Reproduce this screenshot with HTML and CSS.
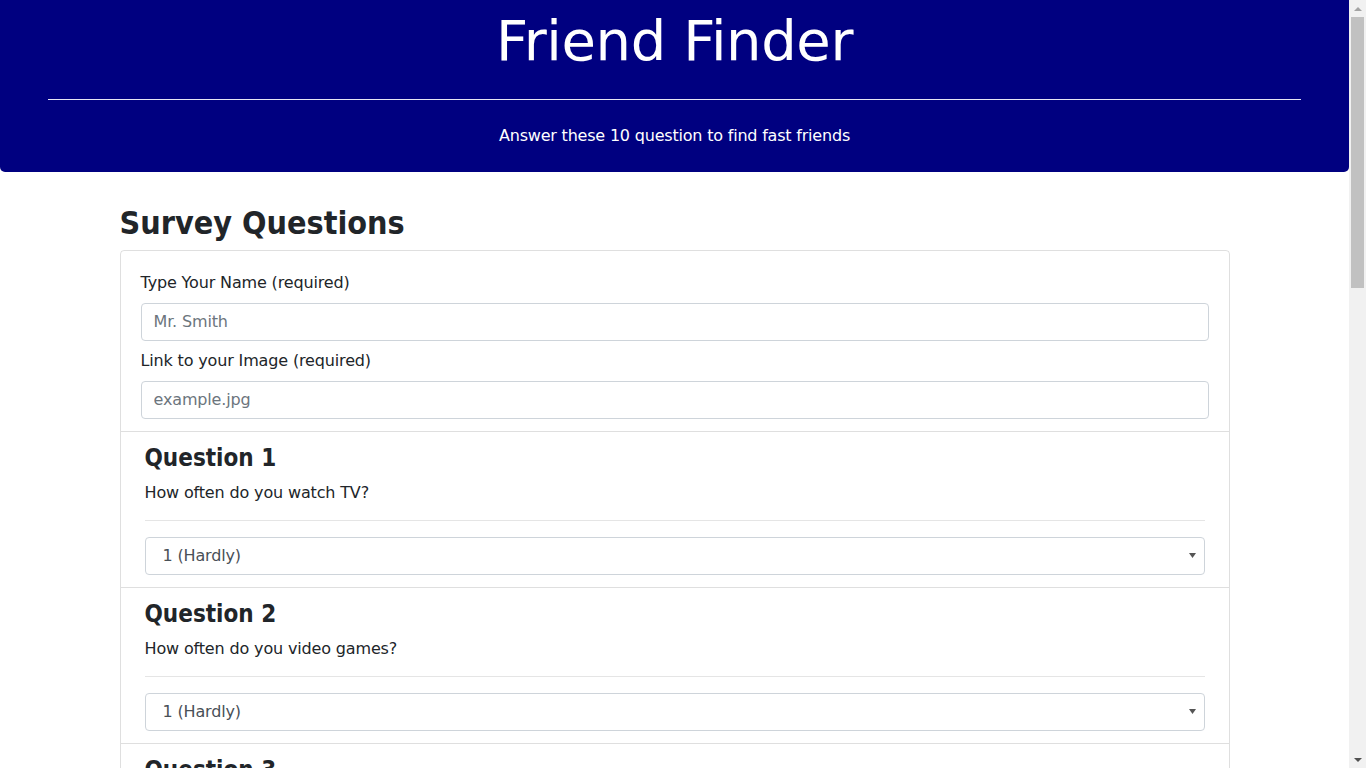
FILE: index.html
```html
<!DOCTYPE html>
<html lang="en">
<head>
<meta charset="utf-8">
<title>Friend Finder</title>
<link rel="stylesheet" href="styles.css">
</head>
<body>
<header class="jumbotron">
  <h1 class="title">Friend Finder</h1>
  <hr class="jumbo-rule">
  <p class="lead-text">Answer these 10 question to find fast friends</p>
</header>
<main class="container">
  <h2 class="page-heading">Survey Questions</h2>
  <form class="card">
    <div class="card-body">
      <div class="form-group">
        <label class="label" for="name">Type Your Name (required)</label>
        <input class="form-control" id="name" type="text" placeholder="Mr. Smith">
      </div>
      <div class="form-group last">
        <label class="label" for="photo">Link to your Image (required)</label>
        <input class="form-control" id="photo" type="text" placeholder="example.jpg">
      </div>
    </div>

    <section class="question">
      <h4 class="q-title">Question 1</h4>
      <p class="q-text">How often do you watch TV?</p>
      <hr class="q-rule">
      <select class="form-select"><option>1 (Hardly)</option><option>2</option><option>3</option><option>4</option><option>5 (Always)</option></select>
    </section>
    <section class="question">
      <h4 class="q-title">Question 2</h4>
      <p class="q-text">How often do you video games?</p>
      <hr class="q-rule">
      <select class="form-select"><option>1 (Hardly)</option><option>2</option><option>3</option><option>4</option><option>5 (Always)</option></select>
    </section>
    <section class="question">
      <h4 class="q-title">Question 3</h4>
      <p class="q-text">How often do you go outside?</p>
      <hr class="q-rule">
      <select class="form-select"><option>1 (Hardly)</option><option>2</option><option>3</option><option>4</option><option>5 (Always)</option></select>
    </section>
    <section class="question">
      <h4 class="q-title">Question 4</h4>
      <p class="q-text">How often do you read books?</p>
      <hr class="q-rule">
      <select class="form-select"><option>1 (Hardly)</option><option>2</option><option>3</option><option>4</option><option>5 (Always)</option></select>
    </section>
    <section class="question">
      <h4 class="q-title">Question 5</h4>
      <p class="q-text">How often do you exercise?</p>
      <hr class="q-rule">
      <select class="form-select"><option>1 (Hardly)</option><option>2</option><option>3</option><option>4</option><option>5 (Always)</option></select>
    </section>
    <section class="question">
      <h4 class="q-title">Question 6</h4>
      <p class="q-text">How often do you travel?</p>
      <hr class="q-rule">
      <select class="form-select"><option>1 (Hardly)</option><option>2</option><option>3</option><option>4</option><option>5 (Always)</option></select>
    </section>
    <section class="question">
      <h4 class="q-title">Question 7</h4>
      <p class="q-text">How often do you cook?</p>
      <hr class="q-rule">
      <select class="form-select"><option>1 (Hardly)</option><option>2</option><option>3</option><option>4</option><option>5 (Always)</option></select>
    </section>
    <section class="question">
      <h4 class="q-title">Question 8</h4>
      <p class="q-text">How often do you listen to music?</p>
      <hr class="q-rule">
      <select class="form-select"><option>1 (Hardly)</option><option>2</option><option>3</option><option>4</option><option>5 (Always)</option></select>
    </section>
    <section class="question">
      <h4 class="q-title">Question 9</h4>
      <p class="q-text">How often do you go to the movies?</p>
      <hr class="q-rule">
      <select class="form-select"><option>1 (Hardly)</option><option>2</option><option>3</option><option>4</option><option>5 (Always)</option></select>
    </section>
    <section class="question">
      <h4 class="q-title">Question 10</h4>
      <p class="q-text">How often do you hang out with friends?</p>
      <hr class="q-rule">
      <select class="form-select"><option>1 (Hardly)</option><option>2</option><option>3</option><option>4</option><option>5 (Always)</option></select>
    </section>
    <div class="actions">
      <button class="btn" type="button">Submit</button>
    </div>
  </form>
</main>
<div class="scrollbar" aria-hidden="true">
  <div class="sb-button">
    <svg width="8" height="4" viewBox="0 0 8 4"><path d="M0 4 L4 0 L8 4 Z" fill="#a3a3a3"/></svg>
  </div>
  <div class="sb-thumb"></div>
  <div class="sb-rest"></div>
  <div class="sb-button">
    <svg width="8" height="4" viewBox="0 0 8 4"><path d="M0 0 L8 0 L4 4 Z" fill="#505050"/></svg>
  </div>
</div>
</body>
</html>
```
FILE: styles.css
```css
* { box-sizing: border-box; }
html, body { margin: 0; padding: 0; }
body {
  margin-right: 17px;
  font-family: "DejaVu Sans", sans-serif;
  font-size: 16px;
  line-height: 1.5;
  letter-spacing: -0.15px;
  color: #212529;
  background: #fff;
}
.scrollbar {
  position: fixed;
  top: 0;
  right: 0;
  width: 17px;
  height: 100vh;
  background: #f1f1f1;
  display: flex;
  flex-direction: column;
  align-items: stretch;
}
.sb-button {
  height: 17px;
  flex: none;
  display: flex;
  align-items: center;
  justify-content: center;
}
.sb-thumb {
  height: 271px;
  flex: none;
  margin: 0 2px;
  background: #c1c1c1;
}
.sb-rest { flex: 1; }
.jumbotron {
  background: #000080;
  color: #fff;
  padding: 7px 48px 24px;
  border-radius: 0 0 5px 5px;
  text-align: center;
  margin-bottom: 32px;
}
.title {
  margin: 0;
  font-size: 56px;
  font-weight: normal;
  line-height: 1.2;
  letter-spacing: -0.4px;
}
.jumbo-rule {
  margin: 25px 0 0;
  border: 0;
  border-top: 1px solid rgba(255, 255, 255, 0.9);
  height: 0;
}
.lead-text {
  margin: 24px 0 0;
  letter-spacing: -0.2px;
}
.container {
  width: 1140px;
  margin: 0 auto;
  padding: 0 15px;
}
.page-heading {
  margin: 0 0 7px;
  font-family: "DejaVu Sans Condensed", "DejaVu Sans", sans-serif;
  font-stretch: condensed;
  font-size: 32px;
  font-weight: bold;
  line-height: 1.2;
  letter-spacing: 0;
}
.card {
  border: 1px solid rgba(0, 0, 0, 0.125);
  border-radius: 4px;
  margin-bottom: 40px;
}
.card-body {
  padding: 20px 20px 12px;
}
.form-group {
  margin-bottom: 8px;
}
.form-group.last { margin-bottom: 0; }
.label {
  display: block;
  margin-bottom: 8px;
}
.form-control, .form-select {
  display: block;
  width: 100%;
  height: 38px;
  padding: 6px 12px;
  font-family: "DejaVu Sans", sans-serif;
  font-size: 16px;
  line-height: 1.5;
  letter-spacing: -0.15px;
  color: #495057;
  background-color: #fff;
  border: 1px solid #ced4da;
  border-radius: 4px;
}
.form-control::placeholder { color: #6c757d; opacity: 1; }
.form-select {
  -webkit-appearance: none;
  appearance: none;
  padding-left: 17px;
  background-image: url("data:image/svg+xml;utf8,<svg xmlns='http://www.w3.org/2000/svg' width='7' height='5'><path d='M0 0 L7 0 L3.5 5 Z' fill='%23555'/></svg>");
  background-repeat: no-repeat;
  background-position: right 8px center;
}
.question {
  border-top: 1px solid rgba(0, 0, 0, 0.125);
  padding: 12px 24px 12px;
}
.q-title {
  margin: 0 0 8px;
  font-family: "DejaVu Sans Condensed", "DejaVu Sans", sans-serif;
  font-stretch: condensed;
  font-size: 24px;
  font-weight: bold;
  line-height: 29px;
  letter-spacing: 0;
}
.q-text { margin: 0; }
.q-rule {
  margin: 15px 0 16px;
  border: 0;
  border-top: 1px solid rgba(0, 0, 0, 0.1);
  height: 0;
}
.actions {
  border-top: 1px solid rgba(0, 0, 0, 0.125);
  padding: 16px 24px;
}
.btn {
  font-family: "DejaVu Sans", sans-serif;
  font-size: 16px;
  line-height: 1.5;
  padding: 6px 12px;
  color: #fff;
  background: #007bff;
  border: 1px solid #007bff;
  border-radius: 4px;
}
```
